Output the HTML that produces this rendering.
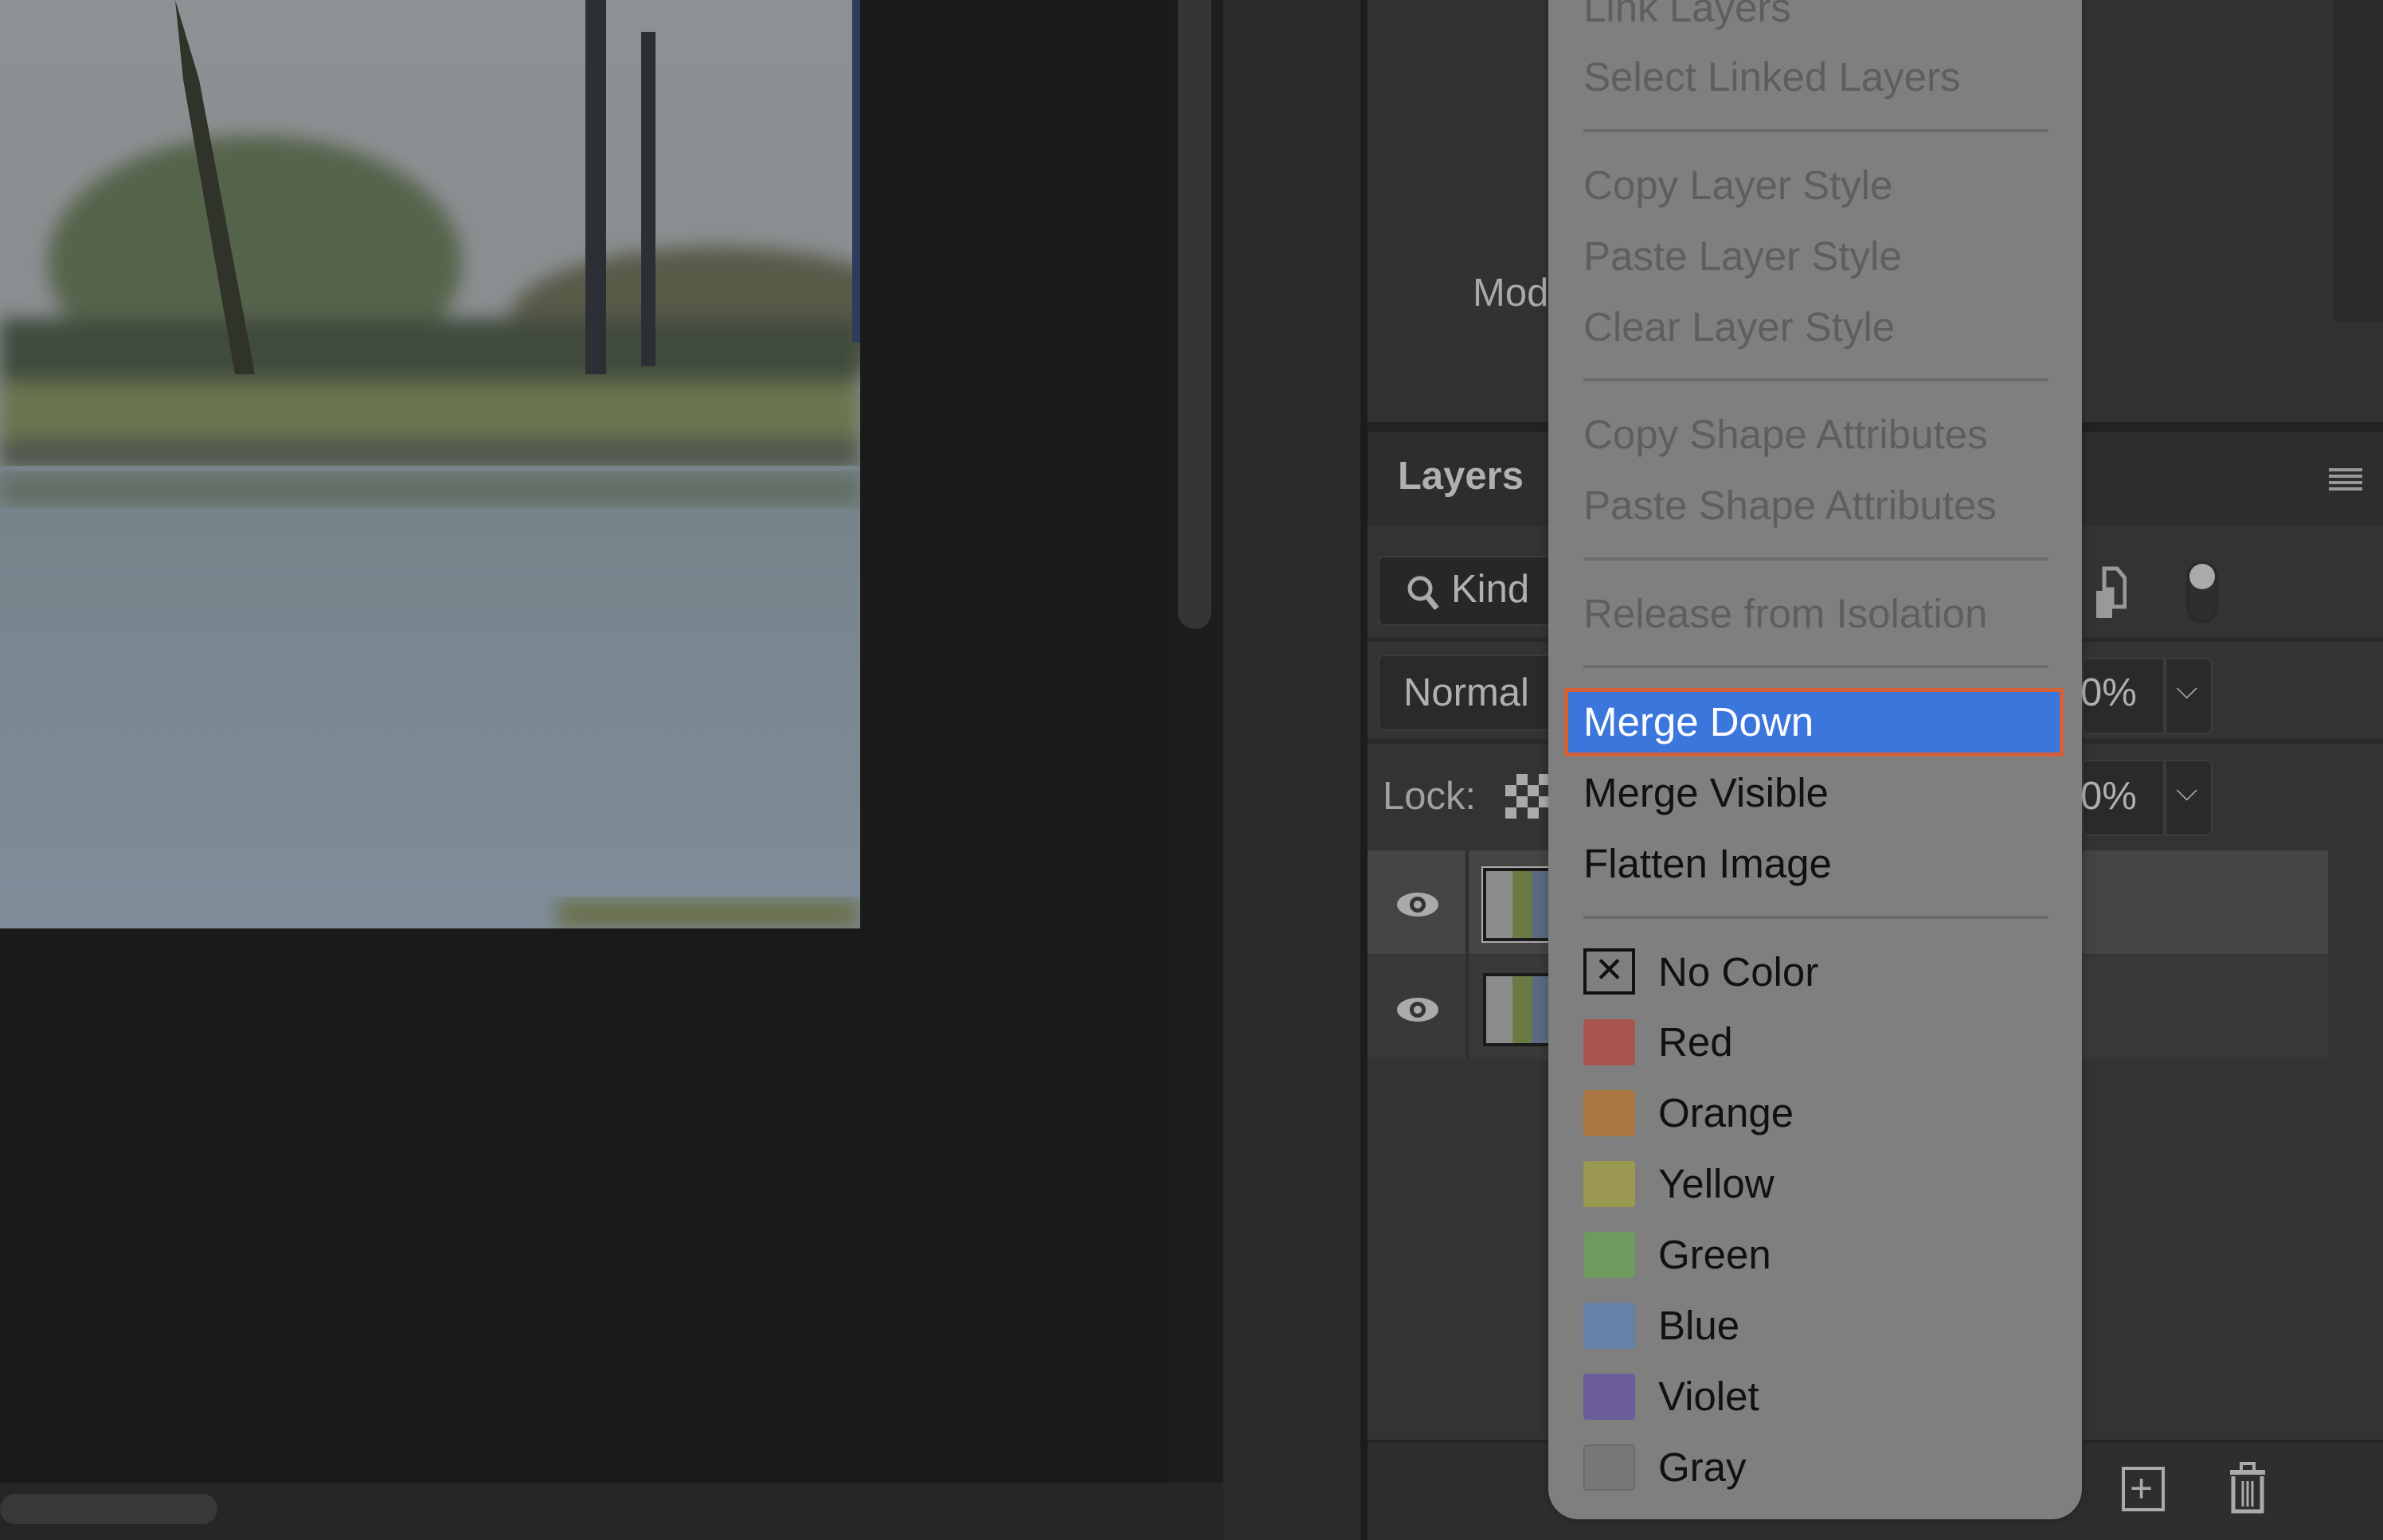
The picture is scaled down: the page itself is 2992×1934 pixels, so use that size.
<!DOCTYPE html>
<html><head><meta charset="utf-8"><style>
*{margin:0;padding:0;box-sizing:border-box}
body{width:2992px;height:1934px;background:#1a1a1a;position:relative;overflow:hidden;font-family:"Liberation Sans",sans-serif}
.a{position:absolute}
.mi{position:absolute;left:1988px;height:90px;line-height:90px;font-size:51px;color:#111;white-space:nowrap}
.dis{color:#5e5e5e}
.sep{position:absolute;left:1988px;width:584px;height:4px;background:#6c6c6c}
.sw{position:absolute;left:1988px;width:65px;height:58px;border-radius:4px}
.pt{color:#a9a9a9;font-size:49px;position:absolute;white-space:nowrap}
</style></head><body>
<svg class="a" style="left:0;top:0" width="1080" height="1166" viewBox="0 0 1080 1166">
<defs>
<linearGradient id="sky" x1="0" y1="0" x2="0" y2="1"><stop offset="0" stop-color="#8c9193"/><stop offset="1" stop-color="#858b8c"/></linearGradient>
<linearGradient id="wat" x1="0" y1="0" x2="0" y2="1"><stop offset="0" stop-color="#76838a"/><stop offset="1" stop-color="#7e8d99"/></linearGradient>
<filter id="b"><feGaussianBlur stdDeviation="12"/></filter>
</defs>
<rect width="1080" height="1166" fill="url(#sky)"/>
<g filter="url(#b)">
<ellipse cx="320" cy="330" rx="260" ry="160" fill="#56634c"/>
<ellipse cx="900" cy="400" rx="260" ry="90" fill="#5a5a48"/>
<rect x="0" y="400" width="1080" height="90" fill="#414c3c"/>
<rect x="0" y="480" width="1080" height="75" fill="#6b7550"/>
<rect x="0" y="550" width="1080" height="40" fill="#4f564b"/>
</g>
<rect x="0" y="585" width="1080" height="581" fill="url(#wat)"/>
<rect x="0" y="595" width="1080" height="40" fill="#636d63" filter="url(#b)"/>
<path d="M220 0 L250 100 L320 470 L295 470 L230 100Z" fill="#2f332a"/>
<rect x="735" y="0" width="26" height="470" fill="#2c3034"/>
<rect x="805" y="40" width="18" height="420" fill="#2c3034"/>
<rect x="1070" y="0" width="10" height="430" fill="#2f3a5c"/>
<rect x="700" y="1130" width="380" height="36" fill="#6a704c" filter="url(#b)"/>
</svg>
<div class="a" style="left:1466px;top:0;width:70px;height:1862px;background:#1d1d1d"></div>
<div class="a" style="left:1479px;top:0;width:42px;height:790px;background:#353535;border-radius:0 0 21px 21px"></div>
<div class="a" style="left:0;top:1862px;width:1536px;height:72px;background:#262626"></div>
<div class="a" style="left:0;top:1876px;width:273px;height:38px;background:#383838;border-radius:19px"></div>
<div class="a" style="left:1536px;top:0;width:6px;height:1934px;background:#2a2a2a"></div>
<div class="a" style="left:1542px;top:0;width:166px;height:1934px;background:#2b2b2b"></div>
<div class="a" style="left:1708px;top:0;width:9px;height:1934px;background:#1c1c1c"></div>
<div class="a" style="left:1717px;top:0;width:1275px;height:530px;background:#323232"></div>
<div class="a" style="left:2929px;top:0;width:63px;height:404px;background:#2b2b2b"></div>
<div class="pt" style="left:1849px;top:340px">Mod</div>
<div class="a" style="left:1717px;top:530px;width:1275px;height:12px;background:#222"></div>
<div class="a" style="left:1717px;top:542px;width:1275px;height:118px;background:#2d2d2d"></div>
<div class="pt" style="left:1755px;top:570px;font-weight:bold;color:#b0b0b0">Layers</div>
<div class="a" style="left:2924px;top:588px;width:42px;height:4px;background:#999;box-shadow:0 8px 0 #999,0 16px 0 #999,0 24px 0 #999"></div>
<div class="a" style="left:1717px;top:660px;width:1275px;height:1150px;background:#333"></div>
<div class="a" style="left:1730px;top:698px;width:240px;height:88px;border-radius:8px;background:#272727;border:2px solid #3c3c3c"></div>
<svg class="a" style="left:1766px;top:722px" width="44" height="48"><circle cx="17" cy="17" r="13" stroke="#aaa" stroke-width="5" fill="none"/><path d="M26 27 L38 42" stroke="#aaa" stroke-width="7"/></svg>
<div class="pt" style="left:1822px;top:712px;color:#b0b0b0">Kind</div>
<svg class="a" style="left:2630px;top:710px" width="40" height="70"><path d="M12 4 H28 L38 16 V52 H22 V30 H12Z" fill="none" stroke="#999" stroke-width="5"/><rect x="2" y="32" width="20" height="34" fill="#999"/></svg>
<div class="a" style="left:2745px;top:705px;width:40px;height:78px;border-radius:20px;border:4px solid #2a2a2a;background:#2e2e2e"></div>
<div class="a" style="left:2749px;top:708px;width:32px;height:32px;border-radius:16px;background:#aaa"></div>
<div class="a" style="left:1717px;top:800px;width:1275px;height:6px;background:#2a2a2a"></div>
<div class="a" style="left:1730px;top:822px;width:240px;height:96px;border-radius:8px;background:#2a2a2a;border:2px solid #3c3c3c"></div>
<div class="pt" style="left:1762px;top:842px;color:#b0b0b0">Normal</div>
<div class="a" style="left:2614px;top:826px;width:164px;height:96px;border-radius:8px;background:#2a2a2a;border:2px solid #3c3c3c"></div>
<div class="pt" style="left:2612px;top:842px;color:#b0b0b0">0%</div>
<div class="a" style="left:2716px;top:826px;width:4px;height:96px;background:#3c3c3c"></div>
<div class="pt" style="left:2732px;top:844px;color:#aaa;font-size:36px">⌵</div>
<div class="a" style="left:1717px;top:928px;width:1275px;height:6px;background:#2a2a2a"></div>
<div class="pt" style="left:1736px;top:972px;color:#a0a0a0">Lock:</div>
<div class="a" style="left:1890px;top:972px;width:56px;height:56px;background:conic-gradient(#aaa 25%,#333 0 50%,#aaa 0 75%,#333 0) 0 0/28px 28px"></div>
<div class="a" style="left:2614px;top:954px;width:164px;height:96px;border-radius:8px;background:#2a2a2a;border:2px solid #3c3c3c"></div>
<div class="pt" style="left:2612px;top:972px;color:#b0b0b0">0%</div>
<div class="a" style="left:2716px;top:954px;width:4px;height:96px;background:#3c3c3c"></div>
<div class="pt" style="left:2732px;top:972px;color:#aaa;font-size:36px">⌵</div>
<div class="a" style="left:1717px;top:1068px;width:1206px;height:130px;background:#444"></div>
<div class="a" style="left:1717px;top:1200px;width:1206px;height:130px;background:#393939"></div>
<div class="a" style="left:1840px;top:1068px;width:4px;height:262px;background:#2e2e2e"></div>
<svg class="a" style="left:1752px;top:1116px" width="56" height="40"><ellipse cx="28" cy="20" rx="26" ry="15" fill="#aaa"/><circle cx="28" cy="20" r="10" fill="#333"/><circle cx="28" cy="20" r="5" fill="#aaa"/></svg>
<svg class="a" style="left:1752px;top:1248px" width="56" height="40"><ellipse cx="28" cy="20" rx="26" ry="15" fill="#aaa"/><circle cx="28" cy="20" r="10" fill="#333"/><circle cx="28" cy="20" r="5" fill="#aaa"/></svg>
<div class="a" style="left:1862px;top:1090px;width:90px;height:92px;background:linear-gradient(90deg,#8a8d8c 40%,#6b7a45 40% 70%,#5a6b80 70%);border:4px solid #1a1a1a;outline:2px solid #aaa"></div>
<div class="a" style="left:1862px;top:1222px;width:90px;height:92px;background:linear-gradient(90deg,#8a8d8c 40%,#6b7a45 40% 70%,#5a6b80 70%);border:4px solid #1a1a1a"></div>
<div class="a" style="left:1717px;top:1808px;width:1275px;height:126px;background:#2e2e2e;border-top:4px solid #262626"></div>
<div class="a" style="left:2664px;top:1842px;width:54px;height:56px;border:4px solid #aaa"></div>
<div class="pt" style="left:2674px;top:1840px;color:#aaa;font-size:50px">+</div>
<svg class="a" style="left:2796px;top:1836px" width="52" height="66"><rect x="4" y="10" width="44" height="6" fill="#aaa"/><rect x="18" y="2" width="16" height="10" fill="none" stroke="#aaa" stroke-width="4"/><path d="M8 18 V62 H44 V18" fill="none" stroke="#aaa" stroke-width="5"/><path d="M20 24V56M26 24V56M32 24V56" stroke="#aaa" stroke-width="3"/></svg>
<div class="a" style="left:1944px;top:-40px;width:670px;height:1948px;background:#7f7f7f;border-radius:0 0 38px 38px;box-shadow:0 0 12px rgba(0,0,0,.3)"></div>
<div class="mi dis" style="top:-35px">Link Layers</div>
<div class="mi dis" style="top:52px">Select Linked Layers</div>
<div class="sep" style="top:162px"></div>
<div class="mi dis" style="top:188px">Copy Layer Style</div>
<div class="mi dis" style="top:277px">Paste Layer Style</div>
<div class="mi dis" style="top:366px">Clear Layer Style</div>
<div class="sep" style="top:475px"></div>
<div class="mi dis" style="top:501px">Copy Shape Attributes</div>
<div class="mi dis" style="top:590px">Paste Shape Attributes</div>
<div class="sep" style="top:700px"></div>
<div class="mi dis" style="top:726px">Release from Isolation</div>
<div class="sep" style="top:835px"></div>
<div class="a" style="left:1964px;top:864px;width:627px;height:86px;background:#3b76dc;border:5px solid #d4603a"></div>
<div class="mi" style="top:862px;color:#fff">Merge Down</div>
<div class="mi" style="top:951px">Merge Visible</div>
<div class="mi" style="top:1040px">Flatten Image</div>
<div class="sep" style="top:1150px"></div>
<div class="sw" style="top:1191px;border:4px solid #111;border-radius:0;text-align:center;line-height:48px;font-size:44px;color:#111">✕</div>
<div class="mi" style="left:2082px;top:1176px">No Color</div>
<div class="sw" style="top:1280px;background:#a9554f"></div><div class="mi" style="left:2082px;top:1264px">Red</div>
<div class="sw" style="top:1369px;background:#a97742"></div><div class="mi" style="left:2082px;top:1353px">Orange</div>
<div class="sw" style="top:1458px;background:#9b9852"></div><div class="mi" style="left:2082px;top:1442px">Yellow</div>
<div class="sw" style="top:1547px;background:#6c9a5f"></div><div class="mi" style="left:2082px;top:1531px">Green</div>
<div class="sw" style="top:1636px;background:#6681a8"></div><div class="mi" style="left:2082px;top:1620px">Blue</div>
<div class="sw" style="top:1725px;background:#6b5d97"></div><div class="mi" style="left:2082px;top:1709px">Violet</div>
<div class="sw" style="top:1814px;background:#777;border:2px solid #6a6a6a"></div><div class="mi" style="left:2082px;top:1798px">Gray</div>
</body></html>
